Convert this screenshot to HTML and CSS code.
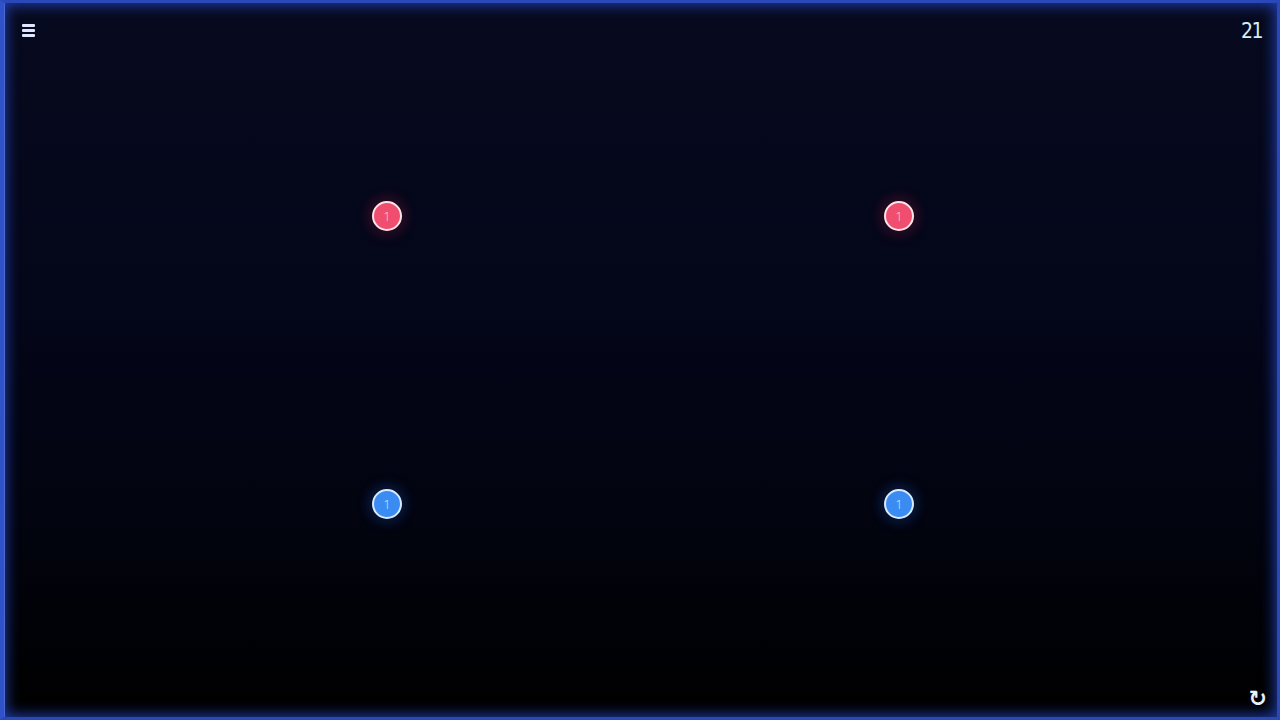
FILE: index.html
```html
<!DOCTYPE html>
<html>
<head>
<meta charset="utf-8">
<link rel="stylesheet" href="styles.css">
</head>
<body>
<div class="frame">
  <div class="topbar">
    <div class="menu"><span class="bar"></span><span class="bar"></span><span class="bar"></span></div>
    <div class="score">21</div>
  </div>
  <div class="board">
    <div class="dot red d1">1</div>
    <div class="dot red d2">1</div>
    <div class="dot blue d3">1</div>
    <div class="dot blue d4">1</div>
  </div>
  <div class="bottombar">
    <div class="reset">↻</div>
  </div>
</div>
</body>
</html>
```
FILE: styles.css
```css
html, body {
  margin: 0;
  padding: 0;
  width: 1280px;
  height: 720px;
  overflow: hidden;
  background: #000;
  font-family: "Liberation Sans", Arial, sans-serif;
}
.frame {
  position: relative;
  box-sizing: border-box;
  width: 1280px;
  height: 720px;
  border: 3px solid #2a48b8;
  border-left: 4px solid #2f52c8;
  background: linear-gradient(180deg, #070a1e 0%, #04061a 40%, #020410 70%, #000 100%);
  box-shadow: inset 0 0 14px 2px rgba(40, 80, 220, 0.75), inset 1px 0 0 #6a7fc8;
  display: flex;
  flex-direction: column;
  justify-content: space-between;
}
.topbar {
  display: flex;
  justify-content: space-between;
  align-items: flex-start;
  padding: 20px 15px 0 18px;
}
.menu {
  display: flex;
  flex-direction: column;
  gap: 2px;
  width: 13px;
  margin-top: 1px;
}
.bar {
  display: block;
  height: 3px;
  background: #dfe6ff;
  border-radius: 1px;
}
.score {
  color: #d6ecff;
  font-family: "DejaVu Sans Condensed", "Liberation Sans", sans-serif;
  font-size: 21px;
  line-height: 22px;
  letter-spacing: -1.5px;
  margin-top: -3px;
}
.bottombar {
  display: flex;
  justify-content: flex-end;
  padding: 0 10px 5px 0;
}
.reset {
  color: #e6f0ff;
  font-size: 22px;
  line-height: 26px;
  font-weight: 700;
  font-family: "DejaVu Sans", sans-serif;
}
.board {
  position: absolute;
  inset: 0;
  pointer-events: none;
}
.dot {
  position: absolute;
  width: 26px;
  height: 26px;
  border-radius: 50%;
  border: 2px solid #fbe4ea;
  color: #f6d4dc;
  font-size: 13px;
  line-height: 26px;
  text-align: center;
  font-family: "Open Sans", sans-serif;
  font-weight: 300;
}
.red {
  background: #ef4e6e;
  box-shadow: 0 0 10px 6px rgba(120, 20, 50, 0.3);
}
.blue {
  background: #3a8cf2;
  border-color: #dbe9ff;
  color: #d6e8ff;
  box-shadow: 0 0 10px 6px rgba(20, 60, 140, 0.3);
}
.d1 { left: 368px; top: 198px; }
.d2 { left: 880px; top: 198px; }
.d3 { left: 368px; top: 486px; }
.d4 { left: 880px; top: 486px; }
```
